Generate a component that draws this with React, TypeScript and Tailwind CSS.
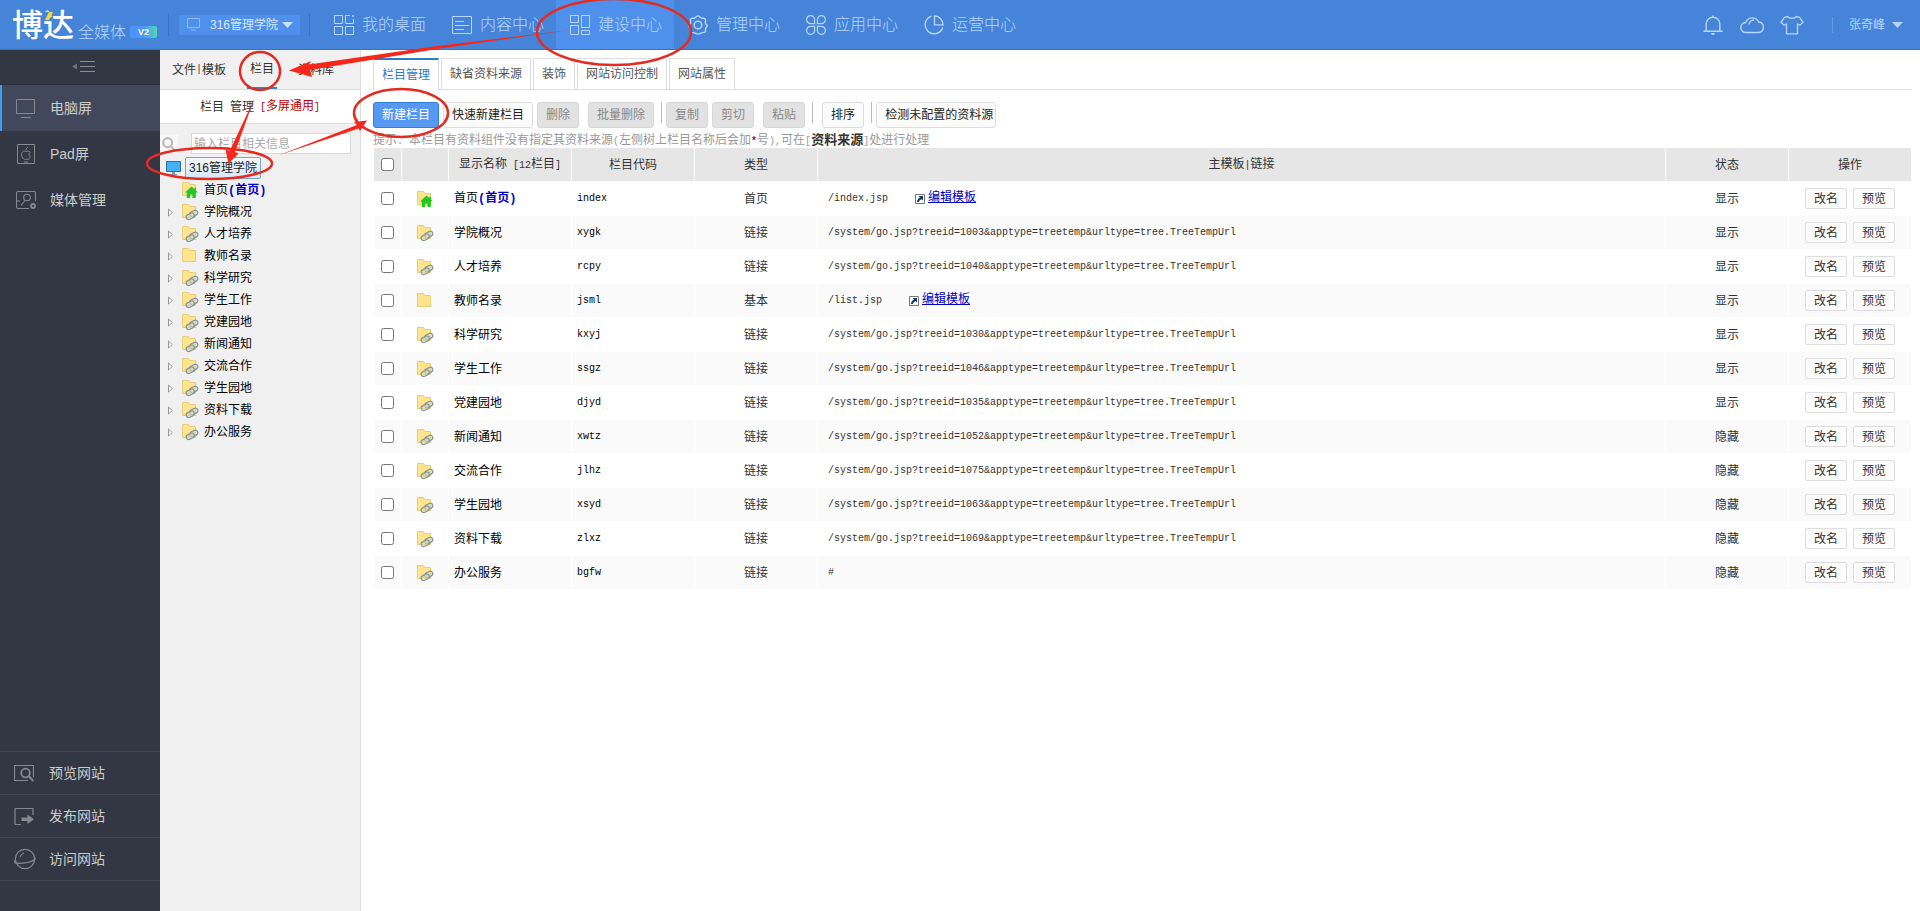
import type { ReactNode } from 'react';

type IconKind = 'home' | 'link' | 'folder';

interface Column {
  name: string;
  code: string;
  kind: IconKind;
  type: string;
  path: string;
  status: string;
}

const goUrl = (id: number) => `/system/go.jsp?treeid=${id}&apptype=treetemp&urltype=tree.TreeTempUrl`;

const columns: Column[] = [
  { name: '首页', code: 'index', kind: 'home', type: '首页', path: '/index.jsp', status: '显示' },
  { name: '学院概况', code: 'xygk', kind: 'link', type: '链接', path: goUrl(1003), status: '显示' },
  { name: '人才培养', code: 'rcpy', kind: 'link', type: '链接', path: goUrl(1040), status: '显示' },
  { name: '教师名录', code: 'jsml', kind: 'folder', type: '基本', path: '/list.jsp', status: '显示' },
  { name: '科学研究', code: 'kxyj', kind: 'link', type: '链接', path: goUrl(1030), status: '显示' },
  { name: '学生工作', code: 'ssgz', kind: 'link', type: '链接', path: goUrl(1046), status: '显示' },
  { name: '党建园地', code: 'djyd', kind: 'link', type: '链接', path: goUrl(1035), status: '显示' },
  { name: '新闻通知', code: 'xwtz', kind: 'link', type: '链接', path: goUrl(1052), status: '隐藏' },
  { name: '交流合作', code: 'jlhz', kind: 'link', type: '链接', path: goUrl(1075), status: '隐藏' },
  { name: '学生园地', code: 'xsyd', kind: 'link', type: '链接', path: goUrl(1063), status: '隐藏' },
  { name: '资料下载', code: 'zlxz', kind: 'link', type: '链接', path: goUrl(1069), status: '隐藏' },
  { name: '办公服务', code: 'bgfw', kind: 'link', type: '链接', path: '#', status: '隐藏' },
];

function Stroke({ size = 20, width = 1.4, className = '', children }: { size?: number; width?: number; className?: string; children: ReactNode }) {
  return (
    <svg width={size} height={size} viewBox="0 0 20 20" fill="none" stroke="currentColor" strokeWidth={width} className={`shrink-0 ${className}`} aria-hidden="true">
      {children}
    </svg>
  );
}

function FolderIcon({ kind }: { kind: IconKind }) {
  return (
    <svg width="18" height="18" viewBox="0 0 18 18" className="shrink-0" aria-hidden="true">
      <path d="M1.5 1.5h6l1 2h6v11h-13z" fill="#fde48d" stroke="#e6cf7a" />
      {kind === 'home' && <path d="M10.5 5.5 4 11.5h1.8V17h3.4v-3.5h2.2V17h3.4v-5.5H17l-2-1.8V6.5h-1.5v1.8z" fill="#22c722" />}
      {kind === 'link' && (
        <g fill="#d8d9b4" fillOpacity="0.6" stroke="#8193a0" strokeWidth="1.2">
          <rect x="8.5" y="8" width="8.5" height="5" rx="2.5" transform="rotate(-28 12.7 10.5)" />
          <rect x="5" y="10.8" width="8.5" height="5" rx="2.5" transform="rotate(-28 9.2 13.3)" />
        </g>
      )}
    </svg>
  );
}

const navItems = [
  {
    label: '我的桌面',
    icon: (
      <Stroke width={1}>
        <path d="M.5.5h8v8h-8zM16 .5h-4.500v8h8V4M.5 11.500h8v8h-8zM11.500 11.500h8v8h-8z" />
        <circle cx="19" cy="1" r="1" fill="currentColor" stroke="none" />
      </Stroke>
    ),
  },
  {
    label: '内容中心',
    icon: (
      <Stroke width={1}>
        <path d="M.5 1.500h19v17H.5zM3 6.500h9M3 10.500h14M3 14.500h9" />
      </Stroke>
    ),
  },
  {
    label: '建设中心',
    active: true,
    icon: (
      <Stroke width={1}>
        <path d="M.5.500h8v7h-8zM.5 10.500h8v9h-8zM11.500.500h8v12h-8zM11.500 15.500h8v4h-8z" />
      </Stroke>
    ),
  },
  {
    label: '管理中心',
    icon: (
      <Stroke width={1.4}>
        <path d="M10 .9c1.600 0 2.100 1.700 3.500 2.200s3-.2 3.800 1-.3 2.600.2 4.100 1.800 1.800 1.800 2.500-1.300 1.500-1.700 2.800.5 2.700-.5 3.600-2.500.2-3.800.8S11.600 19.100 10 19.100s-2-.7-3.300-1.200-2.800.1-3.800-.8-.1-2.300-.5-3.600S.7 11.700.7 10.700s1.300-1.100 1.800-2.500-.6-2.900.2-4.100 2.400-.5 3.800-1S8.400.9 10 .9z" />
        <circle cx="10" cy="10" r="3.800" />
      </Stroke>
    ),
  },
  {
    label: '应用中心',
    icon: (
      <Stroke width={1.2}>
        <path d="M8.600 8.600H4.700A4 4 0 1 1 8.600 4.700zM11.400 8.600V4.700a4 4 0 1 1 3.900 3.900zM8.600 11.400v3.900a4 4 0 1 1-3.900-3.900zM11.400 11.400h3.900a4 4 0 1 1-3.900 3.900z" />
      </Stroke>
    ),
  },
  {
    label: '运营中心',
    icon: (
      <Stroke width={1.4}>
        <path d="M7.500 1.200a9 9 0 1 0 11.300 11.300M10.500.900v9h8.600A9 9 0 0 0 10.500.900z" />
      </Stroke>
    ),
  },
];

function Header() {
  return (
    <header className="flex h-[50px] shrink-0 items-center border-b border-[#3573c4] bg-[#4584d9] text-[#b5d6ff] shadow-[0_1px_3px_#c5dcf8]">
      <div className="flex w-[157px] items-center pt-[2px] pl-3">
        <span className="relative text-[31px] leading-[36px] font-medium text-white">
          博达
          <svg className="absolute top-[4px] left-[32px]" width="10" height="9" viewBox="0 0 10 9" aria-hidden="true">
            <path d="M0 0h6v9H0z" fill="#4584d9" />
            <path d="M5 0h4L5 8H1z" fill="#f9d62e" />
          </svg>
        </span>
        <span className="ml-1 self-end text-base leading-[22px] font-light">全媒体</span>
        <span className="mt-3 ml-1 h-3 flex-1 rounded-[2px] bg-linear-to-r from-[#4d94ff] from-50% to-[#56d3b4] text-center text-[9px] leading-[12px] font-bold text-white">V2</span>
      </div>
      <span className="ml-[11px] h-[22px] w-px bg-[#3873c4]" />
      <button type="button" className="ml-[10px] flex h-5 w-[121px] items-center rounded-[2px] bg-[#4e90ec] pl-2 text-xs text-[#d5e8ff]">
        <svg width="13" height="13" viewBox="0 0 13 13" fill="none" stroke="#8fbcf6" aria-hidden="true">
          <path d="M.5 .5h12v9H.5zM4 12h5" />
        </svg>
        <span className="ml-[10px] flex-1 text-left">316管理学院</span>
        <svg width="11" height="6" className="mr-[7px]" aria-hidden="true"><path d="M0 0h11L5.500 6z" fill="#c9e0ff" /></svg>
      </button>
      <span className="ml-[9px] h-[22px] w-px bg-[#3873c4]" />
      <nav className="ml-[10px] flex h-full flex-1">
        {navItems.map((item) => (
          <a key={item.label} href="#" className={`flex h-full w-[118px] items-center gap-2 pr-[12px] pl-[14px] pt-px text-base font-light whitespace-nowrap ${item.active ? 'bg-[#4e90ec]' : ''}`}>
            {item.icon}
            {item.label}
          </a>
        ))}
      </nav>
      <div className="flex items-center pt-px">
        <button type="button" aria-label="通知">
          <Stroke width={1.4}>
            <path d="M10 .5v1.300M.5 16.200h19M3.200 16V9a6.800 6.800 0 0 1 13.600 0v7" />
            <path d="M8 18h4l-1 2H9z" fill="currentColor" stroke="none" />
          </Stroke>
        </button>
        <button type="button" aria-label="云" className="ml-[17px]">
          <svg width="25" height="18" viewBox="0 0 25 18" fill="none" stroke="currentColor" strokeWidth="1.4" aria-hidden="true">
            <path d="M6 16.500a5 5 0 0 1-.4-10 7 7 0 0 1 13-.5A5.300 5.300 0 0 1 19 16.500zM9 8.500a5 5 0 0 1 5-4.500" />
          </svg>
        </button>
        <button type="button" aria-label="主题" className="ml-[15px]">
          <svg width="24" height="20" viewBox="0 0 24 20" fill="none" stroke="currentColor" strokeWidth="1.3" aria-hidden="true">
            <path d="M7.500 1.500c2 2.300 7 2.300 9 0l3 .8 3.500 5-3 3-2.500-1.300v9.800h-11V9L4 10.300l-3-3 3.500-5z" />
          </svg>
        </button>
        <span className="ml-[28px] h-4 w-px bg-[#5f9be8]" />
        <button type="button" className="ml-4 flex items-center gap-[7px] pr-[17px] text-xs">
          张奇峰
          <svg width="11" height="6" aria-hidden="true"><path d="M0 0h11L5.500 6z" fill="#b5d6ff" /></svg>
        </button>
      </div>
    </header>
  );
}

const deviceItems = [
  {
    label: '电脑屏',
    active: true,
    icon: <Stroke width={1}><path d="M.5 1.500h18v14H.5zM5 19.500h10" /></Stroke>,
  },
  {
    label: 'Pad屏',
    icon: (
      <Stroke width={1}>
        <path d="M1.500.500h17v19h-17zM8 18h4" />
        <path d="M10 7.500c-2-1.200-4.500.2-4.500 3 0 2.500 2 5 3.200 5 .8 0 1-.4 1.600-.4s1 .4 1.700.4c1 0 1.800-1.500 2.300-2.800-2-1-1.700-3.500 0-4.500-1-1.200-2.800-1.300-4.300-.7zM10 6c0-1.500.8-2.500 2-2.800" />
      </Stroke>
    ),
  },
  {
    label: '媒体管理',
    icon: (
      <Stroke width={1.1}>
        <path d="M13 18.500H2a1.500 1.500 0 0 1-1.500-1.500V3A1.500 1.500 0 0 1 2 1.500h16A1.500 1.500 0 0 1 19.500 3v8M1 11h3M5 15.500l4-5" />
        <circle cx="11" cy="7.500" r="3.300" />
        <circle cx="17" cy="16" r="2" strokeWidth="1.800" />
      </Stroke>
    ),
  },
];

const siteItems = [
  {
    label: '预览网站',
    icon: (
      <Stroke width={1.2}>
        <path d="M14 17.500H.5v-15h19V14" />
        <circle cx="11.500" cy="10" r="4.300" strokeWidth="1.800" />
        <path d="m14.800 13.300 4.500 4.700" strokeWidth="2" />
      </Stroke>
    ),
  },
  {
    label: '发布网站',
    icon: (
      <Stroke width={1.2}>
        <path d="M7 18.500H2A1 1 0 0 1 1 17.500v-14A1 1 0 0 1 2 2.500h17V9" />
        <path d="M7.500 11.500h6V8.500l6.500 4.800-6.500 4.700V15h-6z" fill="currentColor" stroke="none" />
      </Stroke>
    ),
  },
  {
    label: '访问网站',
    icon: (
      <Stroke size={22} width={1.1}>
        <circle cx="10" cy="10" r="8.800" />
        <path d="M1.300 11.500C-1 12.500 0 14 4 14c6 0 13-1.500 15-4 .8-1-.2-1.500-.6-1.500M5.500 8A6 6 0 0 1 9 4.500" />
      </Stroke>
    ),
  },
];

function Sidebar() {
  return (
    <aside className="flex w-40 shrink-0 flex-col bg-[#333743] text-sm text-[#ccc]">
      <button type="button" aria-label="收起" className="flex h-[35px] items-center justify-center border-b border-[#2b2e38] pb-[2px] pl-2">
        <svg width="24" height="13" viewBox="0 0 24 13" fill="none" stroke="#8b8d94" aria-hidden="true">
          <path d="M5 3.500v6L0 6.500z" fill="#6f727a" stroke="none" />
          <path d="M8 1.500h15M8 6.500h15M8 11.500h15" />
        </svg>
      </button>
      <nav className="flex-1">
        {deviceItems.map((item) => (
          <a key={item.label} href="#" className={`flex h-[46px] items-center gap-[14px] border-l-2 pl-[14px] ${item.active ? 'border-[#3e9bf0] bg-[#42485b]' : 'border-transparent'}`}>
            <span className="flex w-5 text-[#85888f]">{item.icon}</span>
            {item.label}
          </a>
        ))}
      </nav>
      <nav className="mb-[30px] border-t border-[#3e434f]">
        {siteItems.map((item) => (
          <a key={item.label} href="#" className="flex h-[43px] items-center gap-[15px] border-b border-[#3e434f] pl-[14px]">
            <span className="flex w-5 text-[#85888f]">{item.icon}</span>
            {item.label}
          </a>
        ))}
      </nav>
    </aside>
  );
}

// Narrow punctuation that takes half the width of a full character
function Half({ children }: { children: ReactNode }) {
  return <span className="font-['Liberation_Mono',monospace] text-[10px] whitespace-pre">{children}</span>;
}

function HomeMark() {
  return (
    <b className="font-['Liberation_Mono','Noto_Sans_CJK_SC',monospace] text-[#0000c8]">(首页)</b>
  );
}

function TreePanel() {
  return (
    <section className="w-[201px] shrink-0 border-r border-[#ddd] bg-[#f0f0f0] text-xs text-black">
      <nav className="flex h-10 border-b border-[#ddd] pl-[12px] text-[#333]">
        <a href="#" className="flex h-full w-[54px] items-center whitespace-pre">文件<Half>|</Half>模板</a>
        <a href="#" className="ml-[21px] flex h-full items-center border-b-2 border-[#2a84cc] px-[3px]">栏目</a>
        <a href="#" className="ml-[21px] flex h-full items-center">资料库</a>
      </nav>
      <h2 className="flex h-[34px] items-center justify-center border-b border-[#ddd] bg-white text-[#333]">
        栏目<Half> </Half>管理<Half> </Half>
        <span className="text-[#c00000]"><Half>[</Half>多屏通用<Half>]</Half></span>
      </h2>
      <div className="mt-[9px] flex h-[21px] items-center pr-[9px]">
        <button type="button" aria-label="搜索" className="h-[18px] w-[18px] bg-[#f8f8f8] text-[#bbb]">
          <Stroke size={18} width={2.4}><circle cx="8.500" cy="8.500" r="5" /><path d="m12 12 4 5" /></Stroke>
        </button>
        <input type="text" aria-label="输入栏目相关信息" placeholder="输入栏目相关信息" className="ml-[13px] h-full min-w-0 flex-1 border border-[#d8d8d8] bg-white px-[2px] placeholder:text-[#aaa]" />
      </div>
      <div className="mt-[3px] flex h-[22px] items-center pl-[6px]">
        <svg width="15" height="14" viewBox="0 0 15 14" aria-hidden="true">
          <path d="M.5.500h14v10H.5z" fill="#45b0f5" stroke="#2f6d9c" />
          <path d="M6 11h3v2h2v1H4v-1h2z" fill="#8a9aa6" />
        </svg>
        <span className="ml-1 flex h-full items-center rounded-[2px] border border-[#7da2ce] bg-linear-to-b from-[#f4f8fc] to-[#d6e8f9] px-[3px] text-[#222]">316管理学院</span>
      </div>
      <ul>
        {columns.map((item) => (
          <li key={item.code} className="flex h-[22px] items-center pl-2">
            <svg width="5" height="9" viewBox="0 0 5 9" fill="#fff" stroke="#999" className={`mr-[8px] ${item.kind === 'home' ? 'invisible' : ''}`} aria-hidden="true">
              <path d="M.5 1v7l3.800-3.500z" />
            </svg>
            <FolderIcon kind={item.kind} />
            <a href="#" className="ml-[5px]">
              {item.name}
              {item.kind === 'home' && <HomeMark />}
            </a>
          </li>
        ))}
      </ul>
    </section>
  );
}

function ToolButton({ children, disabled, primary, className = '' }: { children: ReactNode; disabled?: boolean; primary?: boolean; className?: string }) {
  let look = 'border-[#ddd] bg-[#fcfcfc] text-[#222]';
  if (disabled) look = 'border-[#d8d8d8] bg-[#e2e2e2] text-[#888]';
  if (primary) look = 'border-[#2f80d8] bg-[#5799f2] text-white';
  return (
    <button type="button" disabled={disabled} className={`h-[26px] shrink-0 rounded-[3px] border px-2 whitespace-nowrap ${look} ${className}`}>
      {children}
    </button>
  );
}

function ColumnTable() {
  return (
    <table className="w-full table-fixed border-separate border-spacing-px text-center text-[#333]">
      <colgroup>
        <col className="w-[27px]" />
        <col className="w-[46px]" />
        <col className="w-[122px]" />
        <col className="w-[122px]" />
        <col className="w-[122px]" />
        <col />
        <col className="w-[122px]" />
        <col className="w-[122px]" />
      </colgroup>
      <thead>
        <tr className="bg-[#e6e6e6] *:h-[33px] *:p-0 *:font-normal">
          <th><input type="checkbox" aria-label="全选" className="mx-auto block h-[13px] w-[13px]" /></th>
          <th />
          <th>显示名称<Half> [12</Half>栏目<Half>]</Half></th>
          <th>栏目代码</th>
          <th>类型</th>
          <th>主模板<Half>|</Half>链接</th>
          <th>状态</th>
          <th>操作</th>
        </tr>
      </thead>
      <tbody>
        {columns.map((row) => (
          <tr key={row.code} className="even:bg-[#fafafa] *:h-[33px] *:py-0">
            <td className="px-0"><input type="checkbox" aria-label={row.name} className="mx-auto block h-[13px] w-[13px]" /></td>
            <td className="px-0"><span className="flex justify-center"><FolderIcon kind={row.kind} /></span></td>
            <td className="px-[5px] text-left text-black">
              {row.name}
              {row.kind === 'home' && <HomeMark />}
            </td>
            <td className="px-[5px] text-left font-['Liberation_Mono',monospace] text-[10px] text-black">{row.code}</td>
            <td className="px-0">{row.type}</td>
            <td className="px-[10px] text-left">
              <div className="flex items-center">
                <span className="font-['Liberation_Mono',monospace] text-[10px]">{row.path}</span>
                {row.kind !== 'link' && (
                  <a href="#" className="ml-[27px] flex items-center gap-[3px] text-[#0000c0] underline">
                    <svg width="10" height="10" viewBox="0 0 10 10" aria-hidden="true">
                      <path d="M.5.500h9v9h-9z" fill="#fff" stroke="#777" />
                      <path d="M3.500 2h4.500v4.500L6.700 5.200C5.200 5.700 4.300 6.500 4 8H2c0-2 1.200-3.500 3-4.500z" fill="#123c7c" />
                    </svg>
                    <span className="pb-1">编辑模板</span>
                  </a>
                )}
              </div>
            </td>
            <td className="px-0">{row.status}</td>
            <td className="px-0">
              <div className="flex justify-center gap-[6px]">
                {['改名', '预览'].map((label) => (
                  <button key={label} type="button" className="h-[21px] rounded-[2px] border border-[#ddd] bg-[#fcfcfc] px-2">{label}</button>
                ))}
              </div>
            </td>
          </tr>
        ))}
      </tbody>
    </table>
  );
}

function Main() {
  const tabs = ['栏目管理', '缺省资料来源', '装饰', '网站访问控制', '网站属性'];
  return (
    <main className="min-w-0 flex-1 bg-white pt-2 pr-2 pl-3 text-xs">
      <nav className="flex h-8 gap-[2px] border-b border-[#ddd]">
        {tabs.map((tab, i) => (
          <a key={tab} href="#" className={`flex items-center border-x border-[#ddd] px-2 ${i === 0 ? '-mb-px border-t-2 border-t-[#2a7cc4] bg-white text-[#2a7cc4]' : 'border-t text-[#555]'}`}>
            {tab}
          </a>
        ))}
      </nav>
      <div className="mt-3 flex items-start gap-1">
        <ToolButton primary>新建栏目</ToolButton>
        <ToolButton>快速新建栏目</ToolButton>
        <ToolButton disabled>删除</ToolButton>
        <ToolButton disabled className="ml-[5px]">批量删除</ToolButton>
        <span className="ml-[3px] h-[21px] w-px bg-[#bbb]" />
        <ToolButton disabled>复制</ToolButton>
        <ToolButton disabled>剪切</ToolButton>
        <ToolButton disabled className="ml-[5px]">粘贴</ToolButton>
        <span className="ml-[3px] h-[21px] w-px bg-[#bbb]" />
        <ToolButton className="ml-[5px]">排序</ToolButton>
        <span className="ml-[3px] h-[21px] w-px bg-[#bbb]" />
        <ToolButton className="pr-[2px]">检测未配置的资料源</ToolButton>
      </div>
      <p className="mt-1 h-[15px] leading-[16px] whitespace-nowrap text-[#999]">
        提示：本栏目有资料组件没有指定其资料来源<Half>(</Half>左侧树上栏目名称后会加<b className="text-[#c00000]"><Half>*</Half></b>号<Half>),</Half>可在<Half>[</Half>
        <b className="text-[13px] text-[#333]">资料来源</b>
        <Half>]</Half>处进行处理
      </p>
      <ColumnTable />
    </main>
  );
}

// Hand-drawn guide marks that float over the whole page
function GuideMarks() {
  return (
    <svg className="pointer-events-none absolute top-0 left-0" width="700" height="200" viewBox="0 0 700 200" aria-hidden="true">
      <g fill="none" stroke="#e52b20" strokeWidth="2.500">
        <ellipse cx="260" cy="71" rx="20" ry="19" />
        <ellipse cx="614" cy="32" rx="77" ry="33" />
        <ellipse cx="401" cy="113" rx="47" ry="24" />
        <ellipse cx="209.500" cy="163.500" rx="62.500" ry="15.500" />
      </g>
      <g fill="#f7261a">
        <path d="M570 30 437 46 309 64.500 311 61 289 70.500 312 77 310 70 437 49z" />
        <path d="M254.500 98 230 150.500 225.500 150 228.500 163.500 238.500 153.500 235 152z" />
        <path d="M278 155.500 357 125 354 122 367 120.500 360 131 358.500 128.500z" />
      </g>
    </svg>
  );
}

export default function App() {
  return (
    <div className="relative flex min-h-screen flex-col bg-white font-['Liberation_Sans','Noto_Sans_CJK_SC',sans-serif]">
      <Header />
      <div className="flex flex-1">
        <Sidebar />
        <TreePanel />
        <Main />
      </div>
      <GuideMarks />
    </div>
  );
}
